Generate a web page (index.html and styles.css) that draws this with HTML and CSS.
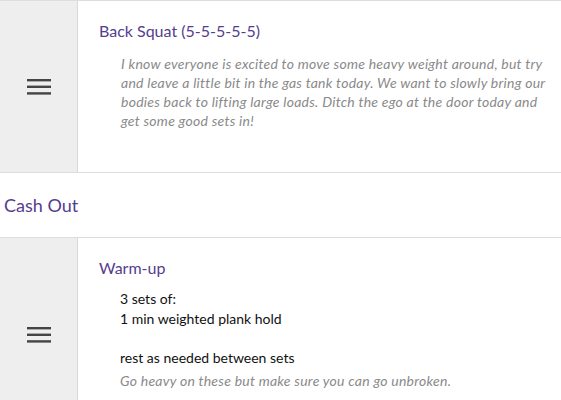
FILE: index.html
```html
<!DOCTYPE html>
<html>
<head>
<meta charset="utf-8">
<link rel="stylesheet" href="styles.css">
</head>
<body>
<div class="list">
  <div class="row">
    <div class="handle">
      <svg class="bars" width="24" height="16" viewBox="0 0 24 16"><rect x="0" y="0" width="24" height="2.4"/><rect x="0" y="6.6" width="24" height="2.4"/><rect x="0" y="13.2" width="24" height="2.4"/></svg>
    </div>
    <div class="content">
      <h3 class="title">Back Squat (5-5-5-5-5)</h3>
      <p class="note">I know everyone is excited to move some heavy weight around, but try and leave a little bit in the gas tank today. We want to slowly bring our bodies back to lifting large loads. Ditch the ego at the door today and get some good sets in!</p>
    </div>
  </div>
  <div class="section">Cash Out</div>
  <div class="row">
    <div class="handle">
      <svg class="bars" width="24" height="16" viewBox="0 0 24 16"><rect x="0" y="0" width="24" height="2.4"/><rect x="0" y="6.6" width="24" height="2.4"/><rect x="0" y="13.2" width="24" height="2.4"/></svg>
    </div>
    <div class="content">
      <h3 class="title">Warm-up</h3>
      <div class="body">
        <p class="plain">3 sets of:<br>1 min weighted plank hold<br><br>rest as needed between sets</p>
        <p class="note">Go heavy on these but make sure you can go unbroken.</p>
      </div>
    </div>
  </div>
</div>
</body>
</html>
```

FILE: styles.css
```css
html, body {
  margin: 0;
  padding: 0;
  background: #fff;
}
body {
  font-family: Lato, "Open Sans", sans-serif;
  color: #222;
}
.list {
  border-top: 1px solid #dddddd;
}
.row {
  display: flex;
  border-bottom: 1px solid #dddddd;
}
.handle {
  width: 77px;
  flex: none;
  background: #eeeeee;
  border-right: 1px solid #d8d8d8;
  display: flex;
  align-items: center;
  justify-content: center;
}
.bars {
  fill: #444;
  display: block;
}
.content {
  flex: 1;
  padding: 20px 10px 26px 21px;
}
.title {
  margin: 0;
  font-weight: 400;
  font-size: 16px;
  line-height: 20px;
  color: #553d8e;
}
.note {
  margin: 13px 0 0 22px;
  font-style: italic;
  font-size: 14px;
  letter-spacing: 0.25px;
  line-height: 19px;
  color: #8a8a8a;
  padding-bottom: 16px;
}
.body {
  margin: 11px 0 0 21px;
}
.body .note {
  margin: 4px 0 0 0;
}
.plain {
  margin: 0;
  font-size: 14px;
  line-height: 19.5px;
  color: #111;
}
.section {
  height: 64px;
  display: flex;
  align-items: center;
  padding-left: 4px;
  font-size: 18px;
  color: #553d8e;
  border-bottom: 1px solid #dddddd;
}
```
